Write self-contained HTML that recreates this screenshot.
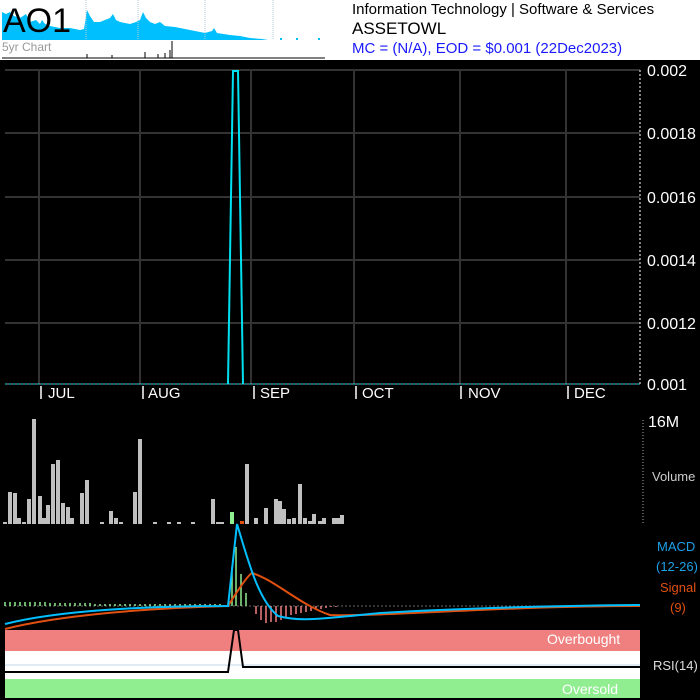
<!DOCTYPE html>
<html><head><style>
body{margin:0;width:700px;height:700px;overflow:hidden;background:#fff;font-family:"Liberation Sans",sans-serif}
</style></head><body>
<svg width="700" height="700" xmlns="http://www.w3.org/2000/svg" style="position:absolute;left:0;top:0;font-family:'Liberation Sans',sans-serif">
<rect x="0" y="0" width="700" height="700" fill="#fff"/>
<!-- mini chart -->
<path d="M2 40 L2 12 L6 14 L10 12 L14 16 L20 18 L26 14 L30 22 L36 20 L40 24 L42 20 L45 24 L50 26 L60 28 L70 28 L80 30 L84 29 L87 10 L90 16 L94 22 L100 22 L105 20 L110 18 L113 14 L116 20 L120 22 L130 24 L136 22 L140 20 L143 12 L146 18 L150 22 L155 24 L160 22 L165 26 L175 27 L185 29 L195 31 L205 33 L212 31 L214 28 L217 33 L230 35 L240 36 L250 38 L262 39 L268 40 Z" fill="#00bfff"/>
<g fill="#00bfff"><rect x="280" y="38" width="2" height="2"/><rect x="296" y="38" width="2" height="2"/><rect x="318" y="38" width="2" height="2"/></g>
<line x1="86" y1="0" x2="86" y2="40" stroke="#b0c8d8" stroke-dasharray="1,1"/>
<line x1="138" y1="0" x2="138" y2="40" stroke="#b0c8d8" stroke-dasharray="1,1"/>
<line x1="205" y1="0" x2="205" y2="40" stroke="#b0c8d8" stroke-dasharray="1,1"/>
<line x1="273" y1="0" x2="273" y2="40" stroke="#b0c8d8" stroke-dasharray="1,1"/>
<line x1="2" y1="58" x2="325" y2="58" stroke="#000" stroke-width="1"/>
<line x1="172" y1="41" x2="172" y2="58" stroke="#000"/>
<path d="M87 58V54M112 58V55M145 58V52M158 58V54M165 58V53M170 58V50" stroke="#000"/>
<text x="3" y="32" font-size="34" fill="#000">AO1</text>
<text x="2" y="51" font-size="12" fill="#999">5yr Chart</text>
<text x="352" y="14" font-size="15" fill="#000">Information Technology | Software &amp; Services</text>
<text x="352" y="34" font-size="17" fill="#000">ASSETOWL</text>
<text x="352" y="53" font-size="15" fill="#1a1aff">MC = (N/A), EOD = $0.001 (22Dec2023)</text>
<!-- black chart -->
<rect x="0" y="60" width="700" height="640" fill="#000"/>
<g stroke="#333" stroke-width="2">
<line x1="39" y1="70" x2="39" y2="384"/><line x1="140" y1="70" x2="140" y2="384"/><line x1="251" y1="70" x2="251" y2="384"/><line x1="354" y1="70" x2="354" y2="384"/><line x1="460" y1="70" x2="460" y2="384"/><line x1="566" y1="70" x2="566" y2="384"/>
<line x1="5" y1="70" x2="640" y2="70"/><line x1="5" y1="133" x2="640" y2="133"/><line x1="5" y1="197" x2="640" y2="197"/><line x1="5" y1="260" x2="640" y2="260"/><line x1="5" y1="323" x2="640" y2="323"/>
</g>
<line x1="640" y1="70" x2="640" y2="384" stroke="#fff" stroke-dasharray="2,2"/>
<line x1="5" y1="384" x2="640" y2="384" stroke="#999"/>
<line x1="5" y1="384" x2="640" y2="384" stroke="#00e0f0" stroke-dasharray="2,2"/>
<path d="M228 384 L233 71 L238 71 L243 384" stroke="#00e0f0" stroke-width="2" fill="none"/>
<g fill="#fff" font-size="16">
<text x="647" y="76">0.002</text><text x="647" y="139">0.0018</text><text x="647" y="203">0.0016</text><text x="647" y="266">0.0014</text><text x="647" y="329">0.0012</text><text x="647" y="390">0.001</text>
<text x="48" y="398" font-size="15">JUL</text><text x="148" y="398" font-size="15">AUG</text><text x="260" y="398" font-size="15">SEP</text><text x="362" y="398" font-size="15">OCT</text><text x="468" y="398" font-size="15">NOV</text><text x="574" y="398" font-size="15">DEC</text>
<text x="648" y="427">16M</text>
<text x="652" y="481" font-size="13" fill="#ccc">Volume</text>
</g>
<g stroke="#fff" stroke-width="1.5"><line x1="41" y1="386" x2="41" y2="399"/><line x1="143" y1="386" x2="143" y2="399"/><line x1="254" y1="386" x2="254" y2="399"/><line x1="356" y1="386" x2="356" y2="399"/><line x1="461" y1="386" x2="461" y2="399"/><line x1="568" y1="386" x2="568" y2="399"/></g>
<line x1="643" y1="420" x2="643" y2="524" stroke="#aaa" stroke-dasharray="1,2"/>
<!-- volume bars -->
<g fill="#c0c0c0">
<rect x="3" y="522" width="4" height="2"/><rect x="8" y="492" width="4" height="32"/><rect x="13" y="493" width="4" height="31"/><rect x="17" y="518" width="4" height="6"/><rect x="22" y="522" width="4" height="2"/><rect x="27" y="499" width="4" height="25"/><rect x="32" y="419" width="4" height="105"/><rect x="38" y="496" width="4" height="28"/><rect x="42" y="518" width="4" height="6"/><rect x="46" y="505" width="4" height="19"/><rect x="51" y="464" width="4" height="60"/><rect x="56" y="460" width="4" height="64"/><rect x="61" y="503" width="4" height="21"/><rect x="66" y="507" width="4" height="17"/><rect x="70" y="518" width="4" height="6"/><rect x="80" y="493" width="4" height="31"/><rect x="85" y="480" width="4" height="44"/><rect x="100" y="522" width="4" height="2"/><rect x="109" y="511" width="4" height="13"/><rect x="114" y="518" width="4" height="6"/><rect x="119" y="522" width="4" height="2"/><rect x="133" y="492" width="4" height="32"/><rect x="138" y="439" width="4" height="85"/><rect x="153" y="522" width="4" height="2"/><rect x="167" y="522" width="4" height="2"/><rect x="177" y="522" width="4" height="2"/><rect x="191" y="522" width="4" height="2"/><rect x="211" y="499" width="4" height="25"/><rect x="216" y="522" width="8" height="2"/><rect x="245" y="464" width="4" height="60"/><rect x="254" y="518" width="4" height="6"/><rect x="264" y="508" width="4" height="16"/><rect x="274" y="499" width="4" height="25"/><rect x="278" y="501" width="4" height="23"/><rect x="282" y="509" width="4" height="15"/><rect x="287" y="519" width="4" height="5"/><rect x="292" y="518" width="4" height="6"/><rect x="298" y="484" width="4" height="40"/><rect x="303" y="518" width="4" height="6"/><rect x="308" y="521" width="4" height="3"/><rect x="312" y="514" width="4" height="10"/><rect x="318" y="521" width="4" height="3"/><rect x="322" y="518" width="4" height="6"/><rect x="332" y="518" width="8" height="6"/><rect x="340" y="515" width="4" height="9"/>
</g>
<rect x="230" y="512" width="4" height="12" fill="#90ee90"/><rect x="240" y="521" width="4" height="3" fill="#e05010"/>
<!-- MACD -->
<line x1="5" y1="606" x2="640" y2="606" stroke="#666" stroke-dasharray="2,2"/>
<g stroke="#90ee90" stroke-width="1.5">
<path d="M5 602V606M10 602V606M15 602V606M20 602V606M25 602V606M30 602V606M35 602V606M40 602V606M45 602V606M50 603V606M55 603V606M60 603V606M65 603V606M70 603V606M75 603V606M80 603V606M85 603V606M90 603V606M95 604V606M100 604V606M105 604V606M110 604V606M115 604V606M120 604V606M125 604V606M130 604V606M135 604V606M140 604V606M145 604V606M150 604V606M155 604V606M160 604V606M165 604V606M170 604V606M175 604V606M180 604V606M185 604V606M190 604V606M195 604V606M200 604V606M205 604V606M210 604V606M215 604V606M220 604V606"/>
<path d="M232 567V606M236 547V606M241 574V606M246 593V606"/>
</g>
<g stroke="#f08080" stroke-width="1.5">
<path d="M256 606V614M261 606V620M266 606V623M271 606V622M276 606V622M281 606V620M286 606V617M291 606V615M296 606V614M301 606V613M306 606V612M311 606V611M316 606V610M321 606V609M326 606V608M331 606V607M336 606V607"/>
</g>
<path d="M5 629 C60 615, 150 608, 228 606 C238 590, 248 575, 252 573 C275 580, 300 605, 330 615 C380 617, 500 606, 640 606" stroke="#e05010" stroke-width="2" fill="none"/>
<path d="M5 624 C60 610, 150 606, 228 606 L237 524 C248 560, 258 600, 278 616 C300 622, 320 619, 380 613 C450 609, 540 606, 640 605" stroke="#00bfff" stroke-width="2" fill="none"/>
<text x="657" y="551" font-size="13" fill="#1ea0e8">MACD</text>
<text x="656" y="571" font-size="13" fill="#1ea0e8">(12-26)</text>
<text x="660" y="592" font-size="13" fill="#e05010">Signal</text>
<text x="670" y="612" font-size="13" fill="#e05010">(9)</text>
<!-- RSI -->
<rect x="5" y="630" width="635" height="21" fill="#f08080"/>
<rect x="5" y="651" width="635" height="28" fill="#fff"/>
<rect x="5" y="679" width="635" height="19" fill="#90ee90"/>
<line x1="5" y1="665" x2="640" y2="665" stroke="#c0d8e8"/>
<path d="M5 672 L228 672 L234 630 L238 630 L243 667 L640 667" stroke="#000" stroke-width="2" fill="none"/>
<text x="547" y="644" font-size="14" fill="#fff">Overbought</text>
<text x="562" y="694" font-size="14" fill="#fff">Oversold</text>
<text x="653" y="670" font-size="13" fill="#ddd">RSI(14)</text>
</svg>
</body></html>
